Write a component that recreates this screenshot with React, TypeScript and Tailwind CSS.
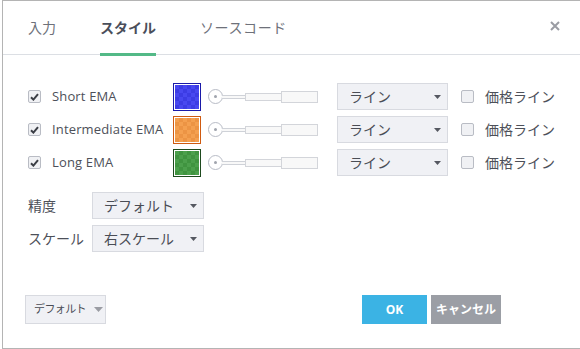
import React from "react";

const font = { fontFamily: '"Open Sans", "Noto Sans CJK JP", sans-serif' };

function Check({ checked }: { checked: boolean }) {
  return (
    <div className="w-[13px] h-[13px] rounded-[2px] border border-[#b9bcc4] bg-[#f0f1f4] flex items-center justify-center">
      {checked && (
        <svg width="9" height="8" viewBox="0 0 9 8">
          <path d="M1 4.2 L3.4 6.6 L8 1.2" stroke="#3b3e45" strokeWidth="2" fill="none" />
        </svg>
      )}
    </div>
  );
}

function Swatch({ border, fill, dark }: { border: string; fill: string; dark: string }) {
  const cells = [];
  for (let r = 0; r < 6; r++) {
    for (let c = 0; c < 6; c++) {
      cells.push(<rect key={r + "-" + c} x={c * 4} y={r * 4} width={4} height={4} fill={(r + c) % 2 ? dark : fill} />);
    }
  }
  return (
    <div className="w-[28px] h-[28px]" style={{ border: `1px solid ${border}` }}>
      <div className="w-full h-full border border-white">
        <svg width="24" height="24" viewBox="0 0 24 24" className="block">
          {cells}
        </svg>
      </div>
    </div>
  );
}

function Slider() {
  return (
    <div className="flex items-center">
      <div className="w-[15px] h-[15px] rounded-full border border-[#b8bcc6] bg-white flex items-center justify-center">
        <div className="w-[3px] h-[3px] rounded-full bg-[#a0a4ad]" />
      </div>
      <div className="w-[23px] h-[4px] border-y border-[#cfd2d8] bg-[#f8f8f8] -ml-px" />
      <div className="w-[37px] h-[8px] border border-[#d3d5da] bg-[#f8f8f8]" />
      <div className="w-[37px] h-[12px] border border-[#d3d5da] bg-[#f8f8f8] -ml-px" />
    </div>
  );
}

function Select({ label, w }: { label: string; w: string }) {
  return (
    <div className={`${w} h-[27px] bg-[#f0f1f5] border border-[#d8dae0] flex items-center justify-between pl-[11px] pr-[6px]`}>
      <span className="text-[14px] text-[#4a4d55] whitespace-nowrap">{label}</span>
      <svg width="7" height="4" viewBox="0 0 7 4"><path d="M0 0 H7 L3.5 4 Z" fill="#555861" /></svg>
    </div>
  );
}

function Row({ name, sw }: { name: string; sw: { border: string; fill: string; dark: string } }) {
  return (
    <div className="flex items-center h-[27px]">
      <div className="w-[25px] pl-[1px]"><Check checked /></div>
      <span className="w-[121px] text-[13px] tracking-[0.15px] text-[#4d5059] whitespace-nowrap">{name}</span>
      <div className="w-[35px]"><Swatch {...sw} /></div>
      <div className="w-[129px]"><Slider /></div>
      <Select label="ライン" w="w-[111px]" />
      <div className="ml-[13px] w-[24px]"><Check checked={false} /></div>
      <span className="text-[14px] text-[#4d5059] whitespace-nowrap">価格ライン</span>
    </div>
  );
}

export default function App() {
  return (
    <div className="w-[580px] h-[349px] bg-white overflow-hidden relative" style={font}>
      <div className="ml-[2px] w-[578px] h-[349px] border-l border-t border-b border-[#b4b4b4] bg-white flex flex-col">
        <div className="h-[54px] border-b border-[#dcdfe4] flex items-end relative">
          <div className="flex pl-[25px] gap-[44px] text-[14px]">
            <div className="h-[53px] flex items-center text-[#6e717a]">入力</div>
            <div className="h-[53px] flex items-center font-bold text-[#4a4e5a] relative">
              スタイル
              <div className="absolute left-0 right-0 bottom-[-2px] h-[3px] bg-[#53b987]" />
            </div>
            <div className="h-[53px] flex items-center text-[#6e717a] tracking-[0.6px]">ソースコード</div>
          </div>
          <svg className="absolute right-[20px] top-[20px]" width="10" height="10" viewBox="0 0 10 10">
            <path d="M1 1 L9 9 M9 1 L1 9" stroke="#9a9ca3" strokeWidth="2" />
          </svg>
        </div>
        <div className="pl-[24px] pt-[28px] flex flex-col gap-[6px]">
          <Row name="Short EMA" sw={{ border: "#1a1aa8", fill: "#4848f0", dark: "#3c3ce4" }} />
          <Row name="Intermediate EMA" sw={{ border: "#cf5a10", fill: "#f4a050", dark: "#ec9444" }} />
          <Row name="Long EMA" sw={{ border: "#1e4a1e", fill: "#4ca04c", dark: "#409440" }} />
        </div>
        <div className="pl-[25px] pt-[16px] flex flex-col gap-[6px]">
          <div className="flex items-center h-[27px]">
            <span className="w-[64px] text-[14px] text-[#4d5059]">精度</span>
            <Select label="デフォルト" w="w-[112px]" />
          </div>
          <div className="flex items-center h-[27px]">
            <span className="w-[64px] text-[14px] text-[#4d5059]">スケール</span>
            <Select label="右スケール" w="w-[112px]" />
          </div>
        </div>
        <div className="mt-auto mb-[24px] flex items-center pl-[22px] pr-[79px]">
          <div className="w-[81px] h-[29px] bg-[#f0f1f5] border border-[#d8dae0] flex items-center pl-[8px] gap-[8px]">
            <span className="text-[11px] tracking-[-0.6px] text-[#4a4d55] whitespace-nowrap">デフォルト</span>
            <svg width="9" height="5" viewBox="0 0 9 5" className="shrink-0"><path d="M0 0 H9 L4.5 5 Z" fill="#9a9ca3" /></svg>
          </div>
          <div className="ml-auto flex gap-[4px]">
            <div className="w-[65px] h-[29px] bg-[#3bb3e4] text-white text-[12px] font-bold flex items-center justify-center">OK</div>
            <div className="w-[70px] h-[29px] bg-[#9b9ea5] text-white text-[12px] font-bold flex items-center justify-center whitespace-nowrap">キャンセル</div>
          </div>
        </div>
      </div>
    </div>
  );
}
